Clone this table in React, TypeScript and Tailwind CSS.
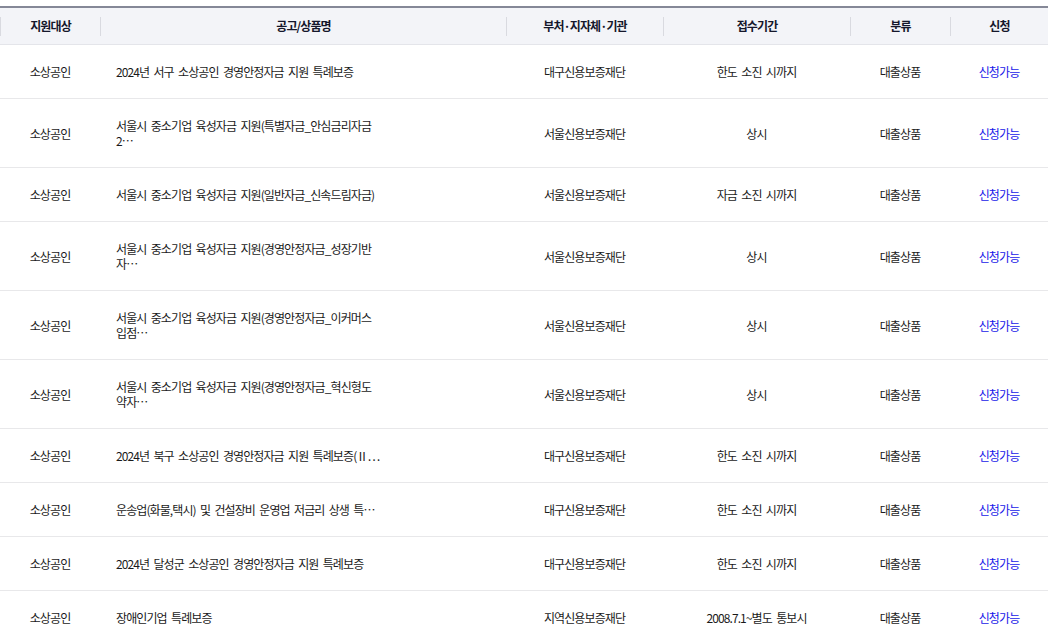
import React from 'react';

type Item = {
  target: string;
  title: string;
  agency: string;
  period: string;
  category: string;
  status: string;
};

const items: Item[] = [
  { target: '소상공인', title: '2024년 서구 소상공인 경영안정자금 지원 특례보증', agency: '대구신용보증재단', period: '한도 소진 시까지', category: '대출상품', status: '신청가능' },
  { target: '소상공인', title: '서울시 중소기업 육성자금 지원(특별자금_안심금리자금\n2…', agency: '서울신용보증재단', period: '상시', category: '대출상품', status: '신청가능' },
  { target: '소상공인', title: '서울시 중소기업 육성자금 지원(일반자금_신속드림자금)', agency: '서울신용보증재단', period: '자금 소진 시까지', category: '대출상품', status: '신청가능' },
  { target: '소상공인', title: '서울시 중소기업 육성자금 지원(경영안정자금_성장기반\n자…', agency: '서울신용보증재단', period: '상시', category: '대출상품', status: '신청가능' },
  { target: '소상공인', title: '서울시 중소기업 육성자금 지원(경영안정자금_이커머스\n입점…', agency: '서울신용보증재단', period: '상시', category: '대출상품', status: '신청가능' },
  { target: '소상공인', title: '서울시 중소기업 육성자금 지원(경영안정자금_혁신형도\n약자…', agency: '서울신용보증재단', period: '상시', category: '대출상품', status: '신청가능' },
  { target: '소상공인', title: '2024년 북구 소상공인 경영안정자금 지원 특례보증(Ⅱ…', agency: '대구신용보증재단', period: '한도 소진 시까지', category: '대출상품', status: '신청가능' },
  { target: '소상공인', title: '운송업(화물,택시) 및 건설장비 운영업 저금리 상생 특…', agency: '대구신용보증재단', period: '한도 소진 시까지', category: '대출상품', status: '신청가능' },
  { target: '소상공인', title: '2024년 달성군 소상공인 경영안정자금 지원 특례보증', agency: '대구신용보증재단', period: '한도 소진 시까지', category: '대출상품', status: '신청가능' },
  { target: '소상공인', title: '장애인기업 특례보증', agency: '지역신용보증재단', period: '2008.7.1~별도 통보시', category: '대출상품', status: '신청가능' },
];

const cols = 'grid grid-cols-[100px_406px_157px_187px_100px_98px]';

const headers = ['지원대상', '공고/상품명', '부처·지자체·기관', '접수기간', '분류', '신청'];

const App = () => {
  return (
    <div className="min-h-screen bg-white pt-[6px] font-['Noto_Sans_CJK_KR',sans-serif] text-[12px] tracking-[-0.9px] [word-spacing:2.5px] text-[#1a1a1a]">
      {/* Header */}
      <div className={`${cols} h-[39px] border-t-2 border-b border-t-[#858897] border-b-[#e4e5ea] bg-[#f3f4f8]`}>
        {headers.map((h) => (
          <div key={h} className="flex h-full items-center">
            <span className="h-[19px] w-px shrink-0 bg-[#d9dae0]" />
            <span className="flex-1 text-center font-bold text-[#15172b]">{h}</span>
          </div>
        ))}
      </div>

      {/* Rows */}
      {items.map((it, i) => (
        <div key={i} className={`${cols} items-center border-b border-[#e8e8ea] py-[19px] leading-[15px]`}>
          <div className="text-center">{it.target}</div>
          <div className="pl-4">
            <p className="w-[280px] whitespace-pre-line">{it.title}</p>
          </div>
          <div className="text-center">{it.agency}</div>
          <div className="text-center">{it.period}</div>
          <div className="text-center">{it.category}</div>
          <div className="text-center text-[#1818e8]">{it.status}</div>
        </div>
      ))}
    </div>
  );
};

export default App;
